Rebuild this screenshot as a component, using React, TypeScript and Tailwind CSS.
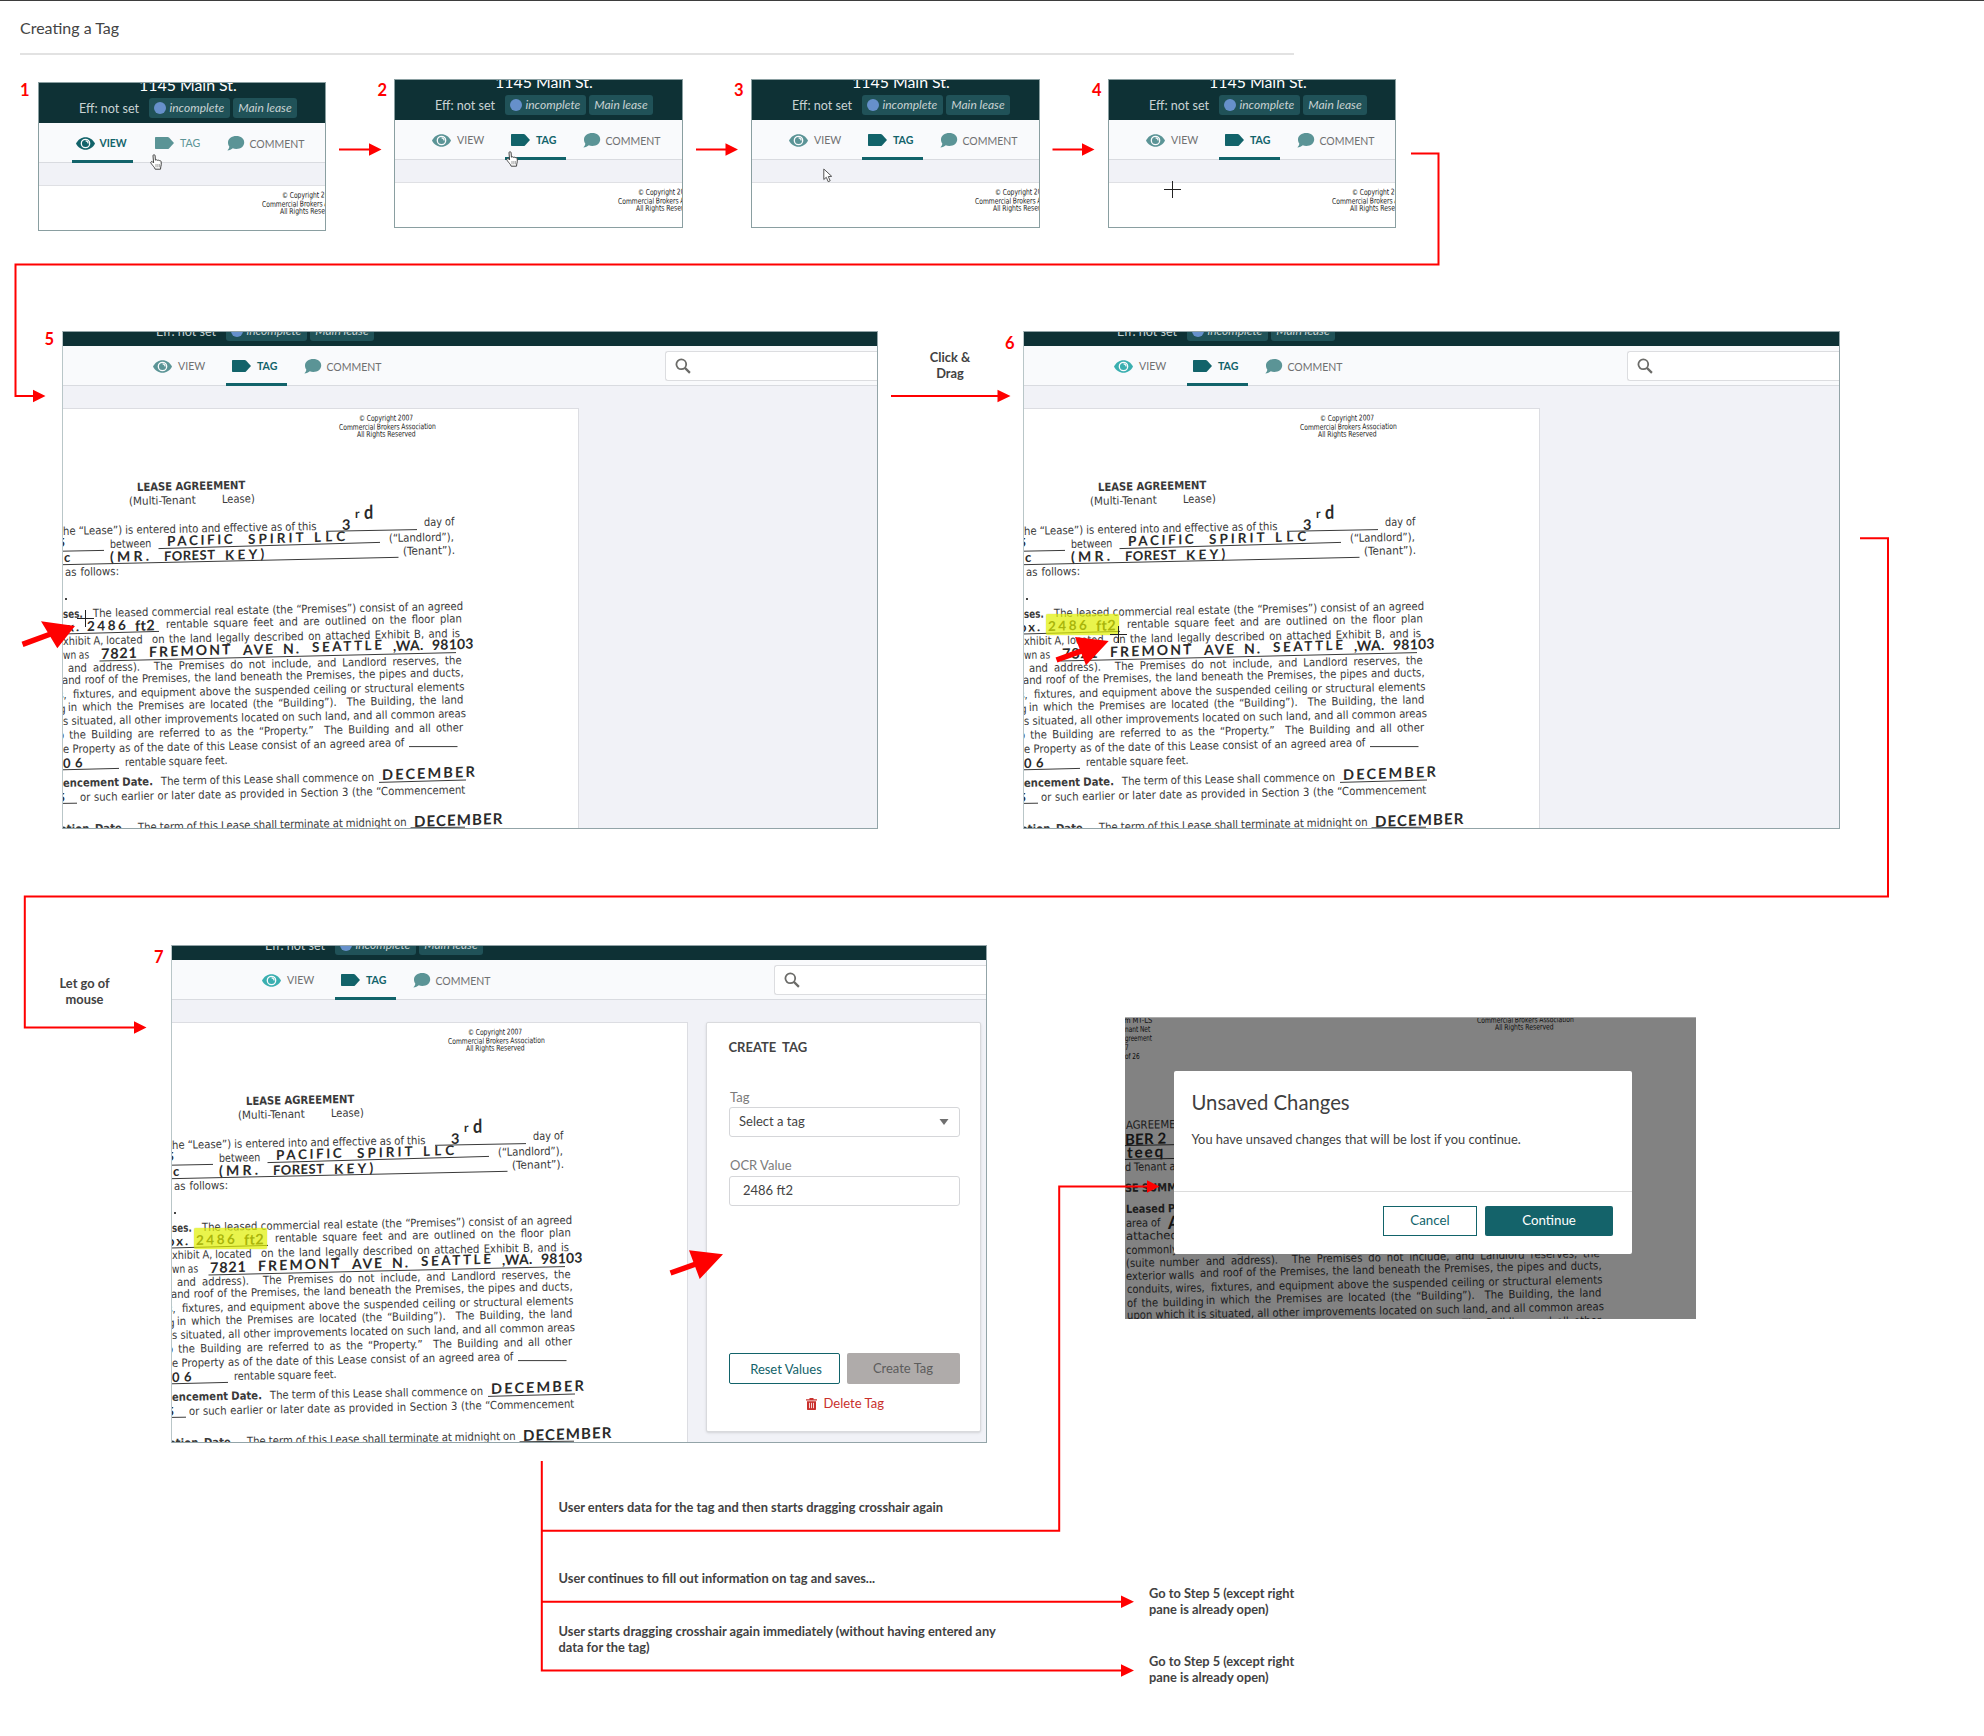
import { useLayoutEffect, useRef, type ReactNode } from "react";

/* ---------- text that fills a measured width ---------- */

type FitProps = {
  x: number;
  y: number;
  w: number;
  fs?: number;
  angle?: number;
  skew?: number;
  mode?: "word" | "letter";
  className?: string;
  children: string;
};

/** One line of text whose baseline starts at (x, y) and which spans w pixels. */
function Fit({ x, y, w, fs = 11.3, angle = -1.1, skew = 0, mode = "word", className = "", children }: FitProps) {
  const ref = useRef<HTMLSpanElement>(null);
  useLayoutEffect(() => {
    const el = ref.current;
    if (!el) return;
    el.style.wordSpacing = "0px";
    el.style.letterSpacing = "0px";
    el.style.transform = "none";
    const natural = el.offsetWidth;
    const spaces = (children.match(/ /g) || []).length;
    let width = natural;
    if (mode === "letter") {
      const ls = Math.max(-0.5, (w - natural) / children.length);
      el.style.letterSpacing = `${ls}px`;
      width = natural + ls * children.length;
    } else if (spaces > 0) {
      const ws = Math.max(-0.3, Math.min(4, (w - natural) / spaces));
      el.style.wordSpacing = `${ws}px`;
      width = natural + ws * spaces;
    }
    const sx = w / width;
    el.style.transform = `rotate(${angle}deg) scaleX(${sx}) skewX(${skew}deg)`;
  }, [w, angle, skew, children, mode]);
  return (
    <span
      ref={ref}
      className={`absolute inline-block origin-bottom-left leading-none whitespace-pre ${className}`}
      style={{ left: x, top: y - fs * 0.86, fontSize: fs }}
    >
      {children}
    </span>
  );
}

/* ---------- scanned lease page ---------- */

type Row = [number, number, number, string];

const PRINT: Row[] = [
  [67, 96.3, 66.7, "(Multi-Tenant"],
  [160, 95, 32.5, "Lease)"],
  [-3, 126.4, 258, "the “Lease”) is entered into and effective as of this"],
  [362, 117.7, 30.7, "day of"],
  [48, 139.3, 41.5, "between"],
  [326.7, 133.7, 65.3, "(“Landlord”),"],
  [341.3, 146.7, 52, "(Tenant”)."],
  [2.7, 167.7, 53.7, "as follows:"],
  [31.3, 209, 370.3, "The leased commercial real estate (the “Premises”) consist of an agreed"],
  [104, 219.7, 295.7, "rentable square feet and are outlined on the floor plan"],
  [1, 236.3, 80, "xhibit A, located"],
  [89.7, 234.3, 308.3, "on the land legally described on attached Exhibit B, and is"],
  [1, 251, 26.7, "wn as"],
  [5.7, 263.7, 71.7, "and address)."],
  [91.7, 261.3, 308.3, "The Premises do not include, and Landlord reserves, the"],
  [0, 276, 402, "and roof of the Premises, the land beneath the Premises, the pipes and ducts,"],
  [10.7, 289.3, 391.7, "fixtures, and equipment above the suspended ceiling or structural elements"],
  [6.3, 302.3, 395.3, "in which the Premises are located (the “Building”).  The Building, the land"],
  [1, 316.3, 402.7, "s situated, all other improvements located on such land, and all common areas"],
  [-4, 330.6, 405.6, "o the Building are referred to as the “Property.”  The Building and all other"],
  [1, 344.7, 341.3, "e Property as of the date of this Lease consist of an agreed area of"],
  [62.7, 357.7, 103, "rentable square feet."],
  [99, 376.7, 213.3, "The term of this Lease shall commence on"],
  [18, 392.7, 385.7, "or such earlier or later date as provided in Section 3 (the “Commencement"],
  [76.3, 423, 269.3, "The term of this Lease shall terminate at midnight on"],
  [-74.5, 127.9, 71, "AGREEMENT ("],
  [-75, 169.6, 73, "d Tenant agree"],
  [-74, 225.3, 35, "area of"],
  [-74, 238.7, 68, "attached E"],
  [-74, 252.3, 73, "commonly kno"],
  [-74, 265.2, 73.5, "(suite number"],
  [-74, 278.9, 68, "exterior walls"],
  [-73.5, 291.7, 78.3, "conduits, wires,"],
  [-73.5, 305.4, 77, "of the building"],
  [-73.5, 317.8, 73, "upon which it i"],
];

const BOLD: Row[] = [
  [74.7, 83, 109, "LEASE AGREEMENT"],
  [1.3, 209.7, 20, "ses."],
  [0.7, 378.7, 90, "encement Date."],
  [-2, 425, 66, "ation Date."],
  [-75, 190.9, 74, "SE SUMMARY"],
  [-74, 212, 74, "Leased Premi"],
];

const SMALL: Row[] = [
  [297.3, 13.2, 54, "© Copyright 2007"],
  [276.5, 21.6, 97, "Commercial Brokers Association"],
  [295, 29, 59, "All Rights Reserved"],
  [-76, 22.3, 28, "m MT-LS"],
  [-75, 31, 25, "nant Net"],
  [-75, 40, 27, "greement"],
  [-75, 48.5, 4, "7"],
  [-75, 57.7, 14.5, "of 26"],
];

type InkRow = [number, number, number, number, string];

const INK: InkRow[] = [
  [280, 121, 11, 14.5, "3"],
  [293, 109, 9, 12, "r"],
  [301.5, 109, 9, 19, "d"],
  [-4, 138.4, 9, 12, "5"],
  [105, 137.2, 68, 13.5, "PACIFIC"],
  [186, 135.4, 59, 13.5, "SPIRIT"],
  [252, 133.8, 36, 13.5, "LLC"],
  [2, 153.4, 9, 13, "c"],
  [48, 153.4, 42, 14, "(MR."],
  [102, 152.6, 52, 13, "FOREST"],
  [163, 151.6, 43, 13.5, "KEY)"],
  [-4, 223.4, 23, 13, "ox."],
  [25, 223, 41, 13.5, "2486"],
  [73, 222.4, 20, 14.5, "ft2"],
  [39, 250.4, 37, 14.5, "7821"],
  [87, 248.4, 84, 14, "FREMONT"],
  [181, 246.2, 32, 14, "AVE"],
  [221, 244.8, 18, 14, "N."],
  [250, 244, 73, 13.5, "SEATTLE"],
  [331, 242.4, 31, 14, ",WA."],
  [370, 240.8, 42, 14, "98103"],
  [1, 359.6, 24, 13, "06"],
  [320, 371.8, 95, 14.5, "DECEMBER"],
  [-4, 393, 10, 12, "5"],
  [352, 417.6, 90, 15, "DECEMBER"],
  [-75, 143, 42, 15, "BER 2"],
  [-73, 156, 38, 15.5, "teeq"],
  [-32, 226, 12, 18, "A"],
];

/* blanks ruled on the form: x1, y1, x2, y2 */
const RULES: [number, number, number, number][] = [
  [264, 122.3, 355, 120.6],
  [-75, 143.6, 42, 141.4],
  [96.5, 139.6, 318, 133.4],
  [-75, 157.4, 0, 156],
  [0, 155.7, 336.5, 148.3],
  [0, 225, 97, 222.4],
  [37.5, 252, 394, 243.6],
  [347, 337.6, 395.5, 337.6],
  [0, 360.8, 57, 359.4],
  [317, 373.4, 404, 371],
  [0, 394.4, 15, 394.2],
  [348.5, 418.8, 403, 418.2],
];

function LeasePage() {
  return (
    <div className="absolute top-0 left-0 text-[#3a3a3a] [font-family:'DejaVu_Sans_Condensed','Noto_Sans',sans-serif]">
      {SMALL.map(([x, y, w, t], i) => (
        <Fit key={i} x={x} y={y} w={w} fs={8} angle={-0.6} className="text-[#222]">
          {t}
        </Fit>
      ))}
      {PRINT.map(([x, y, w, t], i) => (
        <Fit key={i} x={x} y={y + 0.2} w={w} fs={11.3}>
          {t}
        </Fit>
      ))}
      {BOLD.map(([x, y, w, t], i) => (
        <Fit key={i} x={x} y={y} w={w} fs={11.3} className="font-bold">
          {t}
        </Fit>
      ))}
      {INK.map(([x, y, w, fs, t], i) => (
        <Fit
          key={i}
          x={x}
          y={y}
          w={w}
          fs={fs}
          mode="letter"
          angle={-2}
          skew={-2}
          className="font-bold text-[#2a2a2a] [font-family:Lato,sans-serif]"
        >
          {t}
        </Fit>
      ))}
      <svg className="absolute top-0 -left-20 overflow-visible" width="520" height="440">
        {RULES.map(([x1, y1, x2, y2], i) => (
          <line key={i} x1={x1 + 80} y1={y1} x2={x2 + 80} y2={y2} stroke="#3a3a3a" strokeWidth="1" />
        ))}
      </svg>
      <div className="absolute top-[189px] left-[3px] size-[1.5px] bg-[#444]" />
    </div>
  );
}

/* ---------- app chrome ---------- */

const TEAL = "#12636a";
const SOFT = "#5b9496";
const BRIGHT = "#3aafb0";

function EyeIcon({ color }: { color: string }) {
  return (
    <svg width="19" height="13" viewBox="0 0 19 13">
      <path d="M0 6.5C2 2.6 5.4 .2 9.5 .2S17 2.6 19 6.5C17 10.4 13.6 12.8 9.5 12.8S2 10.4 0 6.5Z" fill={color} />
      <circle cx="9.5" cy="6.5" r="4.2" fill="none" stroke="#f9fafc" strokeWidth="1.3" />
      <path d="M9.6 3.9a2.7 2.7 0 0 1 2.5 2.6" fill="none" stroke="#f9fafc" strokeWidth="1.1" />
    </svg>
  );
}

function TagIcon({ color }: { color: string }) {
  return (
    <svg width="19" height="12" viewBox="0 0 19 12">
      <path d="M1 0h11.6c.6 0 1 .2 1.4.6L19 6l-5 5.4c-.4.4-.8.6-1.4.6H1c-.6 0-1-.4-1-1V1c0-.6.4-1 1-1Z" fill={color} />
    </svg>
  );
}

function CommentIcon() {
  return (
    <svg width="18" height="15" viewBox="0 0 18 15">
      <path
        d="M9.3 0c4.5 0 7.9 2.7 7.9 6.4s-3.4 6.5-7.9 6.5c-1.3 0-2.5-.2-3.5-.6C4.5 13.5 2.6 14.4.4 14.4c1-.9 1.8-2.2 1.9-3.8C1.5 9.5 1 8 1 6.4 1 2.7 4.8 0 9.3 0Z"
        fill={SOFT}
      />
    </svg>
  );
}

function SearchIcon() {
  return (
    <svg width="16" height="16" viewBox="0 0 16 16" fill="none" stroke="#6b6b68" strokeWidth="1.8">
      <circle cx="6.3" cy="6.3" r="4.9" />
      <path d="M9.9 9.9l5 5" strokeWidth="2.2" />
    </svg>
  );
}

function Tabs({ active, eye, search }: { active: "view" | "tag"; eye: string; search?: boolean }) {
  const isView = active === "view";
  return (
    <div className="flex h-[40px] shrink-0 border-b border-[#d9dbe0] bg-[#f9fafc] pl-[87px] text-[10.6px] leading-none">
      <div className={`flex h-[40px] w-[61px] items-center pl-[4px] ${isView ? "border-b-3 border-[#12636a]" : ""}`}>
        <div className={isView ? "mt-[3px]" : ""}>
          <EyeIcon color={isView ? TEAL : eye} />
        </div>
        <span className={isView ? "mt-[3px] ml-[4.5px] text-[10.4px] font-bold text-[#12636a]" : "ml-[6px] text-[#6f7071]"}>VIEW</span>
      </div>
      <div
        className={`ml-[16px] flex h-[40px] w-[60.5px] items-center pl-[5.5px] ${isView ? "" : "border-b-3 border-[#12636a] pt-[3px]"}`}
      >
        <TagIcon color={isView ? SOFT : TEAL} />
        <span className={`mt-[1.5px] ml-[6.5px] ${isView ? "text-[#5b9496]" : "font-bold text-[#12636a]"}`}>TAG</span>
      </div>
      <div className="ml-[17px] flex h-[40px] items-center">
        <CommentIcon />
        <span className="mt-[2px] ml-[5px] text-[10.5px] text-[#6f7071]">COMMENT</span>
      </div>
      {search && (
        <div className="mt-[5px] ml-auto flex h-[30px] w-[213px] shrink-0 items-center rounded-l-[3px] border border-r-0 border-[#dcdde0] bg-white pl-[8.5px]">
          <SearchIcon />
        </div>
      )}
    </div>
  );
}

function Header() {
  return (
    <div className="flex h-[60px] shrink-0 flex-col justify-end bg-[#0e3135] pb-[5px]">
      <div className="pl-[154px] text-[15.9px] leading-[16px] whitespace-nowrap text-white">1145 Main St.</div>
      <div className="mt-[5.5px] flex h-[20px] items-center pl-[94px] text-[#c9d3d4]">
        <span className="mt-[2px] w-[70px] text-[12.6px] whitespace-nowrap">Eff: not set</span>
        <span className="flex h-[20px] w-[81px] items-center rounded-[3px] bg-[#205258] pl-[5px] text-[12px] italic">
          <i className="mr-[3.5px] size-[12px] rounded-full bg-[#6690cb]" />
          incomplete
        </span>
        <span className="ml-[3px] flex h-[20px] w-[64px] items-center justify-center rounded-[3px] bg-[#205258] text-[12px] italic">
          Main lease
        </span>
      </div>
    </div>
  );
}

type ScreenProps = {
  place: string;
  active?: "view" | "tag";
  eye?: string;
  children?: ReactNode;
};

/** Small crop of the app, used for the first four steps. */
function SmallScreen({ place, active = "tag", eye = SOFT, children }: ScreenProps) {
  return (
    <div className={`absolute h-[149px] overflow-hidden bg-white ${place}`}>
      <div className="-mt-[19px] -ml-[53px] flex w-[520px] flex-col">
        <Header />
        <Tabs active={active} eye={eye} />
        <div className="h-[23px] border-b border-[#dfe0e4] bg-[#f1f2f7]" />
        <div className="relative h-[60px] bg-white">
          <LeasePage />
        </div>
      </div>
      <div className="absolute inset-0 border border-[#8a9fa1]" />
      {children}
    </div>
  );
}

/** Wide crop of the app with the document and an optional right pane. */
function WideScreen({ place, eye = SOFT, pane, children }: ScreenProps & { pane?: ReactNode }) {
  return (
    <div className={`absolute h-[498px] overflow-hidden bg-[#f1f2f7] ${place}`}>
      <div className="-mt-[45px] flex flex-col">
        <Header />
        <Tabs active="tag" eye={eye} search />
        <div className="flex pt-[22px]">
          <div className="relative h-[425px] w-[517px] shrink-0 overflow-hidden border-t border-r border-[#dcdde2] bg-white">
            <LeasePage />
          </div>
          {pane}
        </div>
      </div>
      <div className="absolute inset-0 border border-[#93a4a8] border-l-[#b9c6c8]" />
      {children}
    </div>
  );
}

function CreateTagPane() {
  return (
    <div className="ml-[18px] flex h-[410px] w-[275px] flex-col rounded-[2px] border border-[#d9dadd] bg-white px-[21.5px] text-[13px] leading-none text-[#434343] shadow-sm">
      <div className="mt-[18px] font-bold [word-spacing:3px]">CREATE TAG</div>
      <div className="mt-[36.5px] ml-[1.5px] text-[#7b7b7b]">Tag</div>
      <div className="mt-[3px] flex h-[30px] w-[231px] items-center justify-between rounded-[3px] border border-[#d5d6d9] pr-[10px] pl-[9.5px]">
        <span>Select a tag</span>
        <svg width="10" height="6" viewBox="0 0 10 6">
          <path d="M.5 0h9L5 6Z" fill="#6f6f6f" />
        </svg>
      </div>
      <div className="mt-[22px] ml-[1.5px] text-[#7b7b7b]">OCR Value</div>
      <div className="mt-[4px] flex h-[30px] w-[231px] items-center rounded-[3px] border border-[#d5d6d9] pl-[13.5px]">2486 ft2</div>
      <div className="mt-[147.5px] flex w-[231px] gap-[7px]">
        <div className="flex h-[31px] w-[111px] items-center justify-center rounded-[2px] border border-[#12636a] pt-[1px] pl-[4px] text-[#12636a]">
          Reset Values
        </div>
        <div className="flex h-[31px] w-[113px] items-center justify-center rounded-[2px] bg-[#afabaa] text-[#5c5c5c]">Create Tag</div>
      </div>
      <div className="mt-[13px] flex items-center pl-[77px] text-[#c9302c]">
        <svg width="11" height="12" viewBox="0 0 11 12">
          <path d="M3.5 0h4v1.2H11v1.3H0V1.2h3.5Z" fill="#c9302c" />
          <path d="M1 3.2h9v7.8c0 .6-.4 1-1 1H2c-.6 0-1-.4-1-1Z" fill="#c9302c" />
          <path d="M3.5 4.8v5.4M5.5 4.8v5.4M7.5 4.8v5.4" stroke="#fff" strokeWidth=".8" />
        </svg>
        <span className="ml-[7px]">Delete Tag</span>
      </div>
    </div>
  );
}

function UnsavedDialog() {
  return (
    <div className="absolute top-[1017px] left-[1125px] h-[301.5px] w-[571px] overflow-hidden bg-white">
      <div className="absolute -top-[15px] left-[75px]">
        <LeasePage />
      </div>
      <div className="absolute inset-0 border-t border-[#aaa] bg-black/49" />
      <div className="absolute top-[54px] left-[49px] flex h-[183px] w-[458px] flex-col rounded-[2px] bg-white text-[#3f3f3f]">
        <div className="mt-[19px] ml-[17.5px] text-[20.3px] leading-[24px]">Unsaved Changes</div>
        <div className="mt-[17px] ml-[17.5px] text-[12.85px] leading-[16px]">You have unsaved changes that will be lost if you continue.</div>
        <div className="mt-auto flex h-[63px] justify-end gap-[8px] border-t border-[#dcdcdc] pt-[14px] pr-[19px] text-[13.3px]">
          <div className="flex h-[30px] w-[94px] items-center justify-center border border-[#12636a] text-[#12636a]">Cancel</div>
          <div className="flex h-[30px] w-[128px] items-center justify-center rounded-[2px] bg-[#14636a] text-white">Continue</div>
        </div>
      </div>
    </div>
  );
}

/* ---------- cursors and markers ---------- */

function HandCursor({ place }: { place: string }) {
  return (
    <svg className={`absolute ${place}`} width="13" height="16" viewBox="0 0 13 16">
      <path
        d="M3 1.8c0-1.500 2-1.500 2.100 0l.3 4.400c.4-.7 1.600-.6 1.900.2.500-.6 1.600-.4 1.800.4.600-.5 1.800-.2 2 .8.400 2.100.3 3.600-.3 5.200l-.3 2.400H5.200c-.2-1-1-1.900-1.800-2.900C2.500 11.300 1 9.400.8 8.600c-.2-.9 1-1.400 1.700-.8l1.100 1.100Z"
        fill="#fff"
        stroke="#444"
        strokeWidth="1"
      />
      <path d="M6 10v3.300M7.900 10v3.300M9.700 10v3.300" stroke="#777" strokeWidth=".7" />
    </svg>
  );
}

function ArrowCursor({ place }: { place: string }) {
  return (
    <svg className={`absolute ${place}`} width="10" height="15" viewBox="0 0 10 15">
      <path d="M.8 1v10.500l2.500-2.200 1.900 4.400 2-.9-1.900-4.200 3.400-.3Z" fill="#fff" stroke="#555" strokeWidth="1" />
    </svg>
  );
}

function Crosshair({ place }: { place: string }) {
  return (
    <svg className={`absolute ${place}`} width="17" height="17" viewBox="0 0 17 17">
      <path d="M8.500 0v17M0 8.500h17" stroke="#222" strokeWidth="1" />
    </svg>
  );
}

function Highlight({ place }: { place: string }) {
  return <div className={`absolute h-[21px] w-[73px] rounded-[2px] bg-[#e0f000]/70 shadow-[0_0_1px_#a9b400] ${place}`} />;
}

function Connectors() {
  return (
    <svg className="pointer-events-none absolute inset-0" width="1984" height="1736" fill="none" stroke="#ff0000" strokeWidth="2">
      <path d="M339 149.500H371M696 149.500H728M1052.500 149.500H1084" />
      <path d="M1411 153.500H1438.500V264.500H15.500V396H34" />
      <path d="M891 396H998" />
      <path d="M1860 538.300H1888V896.500H24.800V1027.500H135" />
      <path d="M541.800 1461V1670.500H1122M541.800 1530.800H1059.200V1186.500H1148M541.800 1601.700H1122" />
      <g fill="#ff0000" stroke="none">
        <path d="M369 143.300L381.500 149.500L369 155.700ZM725.500 143.300L738 149.500L725.500 155.700ZM1082 143.300L1094.500 149.500L1082 155.700Z" />
        <path d="M33 389.800L45.500 396L33 402.200ZM997.500 389.800L1010.500 396L997.500 402.200ZM134 1021.300L146.500 1027.500L134 1033.700Z" />
        <path d="M1147 1180.300L1159.500 1186.500L1147 1192.700ZM1121 1595.500L1134 1601.700L1121 1607.900ZM1121 1664.300L1134 1670.500L1121 1676.700Z" />
        <path d="M41 621.300L75 626L57.300 648.300ZM1075 637L1108.700 641L1086 665.300ZM689 1250.300L723 1254.300L699.700 1279Z" />
      </g>
      <path d="M22.500 644.300L52 633.500M1056.500 660L1086 649.300M670.500 1273L700 1262.500" strokeWidth="5.500" />
    </svg>
  );
}

function Num({ place, children }: { place: string; children: string }) {
  return <div className={`absolute text-[16.5px] leading-[20px] font-bold text-[#ff0000] ${place}`}>{children}</div>;
}

function Note({ place, children }: { place: string; children: ReactNode }) {
  return <div className={`absolute text-[12.84px] font-bold whitespace-nowrap text-[#424242] ${place}`}>{children}</div>;
}

export default function App() {
  return (
    <div className="relative h-[1736px] w-[1984px] overflow-hidden border-t border-[#3d3d3d] bg-white [font-family:Lato,sans-serif]">
      <div className="absolute -top-px left-0 h-[1736px] w-[1984px]">
        <div className="ml-[20px] h-[55px] w-[1274px] border-b-2 border-[#e2e2e2] pt-[18px] text-[16px] leading-[20px] text-[#444]">Creating a Tag</div>

        <Num place="top-[80px] left-[20px]">1</Num>
        <Num place="top-[80px] left-[377.5px]">2</Num>
        <Num place="top-[80px] left-[734px]">3</Num>
        <Num place="top-[80px] left-[1092px]">4</Num>
        <SmallScreen place="top-[82px] left-[38px] w-[288px]" active="view">
          <HandCursor place="top-[72px] left-[112px]" />
        </SmallScreen>
        <SmallScreen place="top-[79px] left-[394px] w-[289px]">
          <HandCursor place="top-[72px] left-[112px]" />
        </SmallScreen>
        <SmallScreen place="top-[79px] left-[751px] w-[289px]">
          <ArrowCursor place="top-[89px] left-[72px]" />
        </SmallScreen>
        <SmallScreen place="top-[79px] left-[1108px] w-[288px]">
          <Crosshair place="top-[102px] left-[56px]" />
        </SmallScreen>

        <Num place="top-[329px] left-[44.5px]">5</Num>
        <WideScreen place="top-[331px] left-[62px] w-[816px]">
          <Crosshair place="top-[279px] left-[15px]" />
        </WideScreen>
        <Note place="top-[350px] left-[890px] w-[120px] text-center leading-[15.5px]">
          Click &amp;
          <br />
          Drag
        </Note>
        <Num place="top-[333px] left-[1005px]">6</Num>
        <WideScreen place="top-[331px] left-[1023px] w-[817px]" eye={BRIGHT}>
          <Highlight place="top-[283px] left-[23px]" />
          <Crosshair place="top-[295px] left-[87px]" />
        </WideScreen>

        <Num place="top-[947px] left-[154px]">7</Num>
        <Note place="top-[976px] left-[24.5px] w-[120px] text-center leading-[15.5px]">
          Let go of
          <br />
          mouse
        </Note>
        <WideScreen place="top-[945px] left-[171px] w-[816px]" eye={BRIGHT} pane={<CreateTagPane />}>
          <Highlight place="top-[283px] left-[22.5px]" />
        </WideScreen>

        <UnsavedDialog />

        <Note place="top-[1499px] left-[558.5px] leading-[16px]">User enters data for the tag and then starts dragging crosshair again</Note>
        <Note place="top-[1570px] left-[558.5px] leading-[16px]">User continues to fill out information on tag and saves...</Note>
        <Note place="top-[1623px] left-[558.5px] leading-[16px]">
          User starts dragging crosshair again immediately (without having entered any
          <br />
          data for the tag)
        </Note>
        <Note place="top-[1585px] left-[1149px] leading-[16px]">
          Go to Step 5 (except right
          <br />
          pane is already open)
        </Note>
        <Note place="top-[1653px] left-[1149px] leading-[16px]">
          Go to Step 5 (except right
          <br />
          pane is already open)
        </Note>

        <Connectors />
      </div>
    </div>
  );
}
